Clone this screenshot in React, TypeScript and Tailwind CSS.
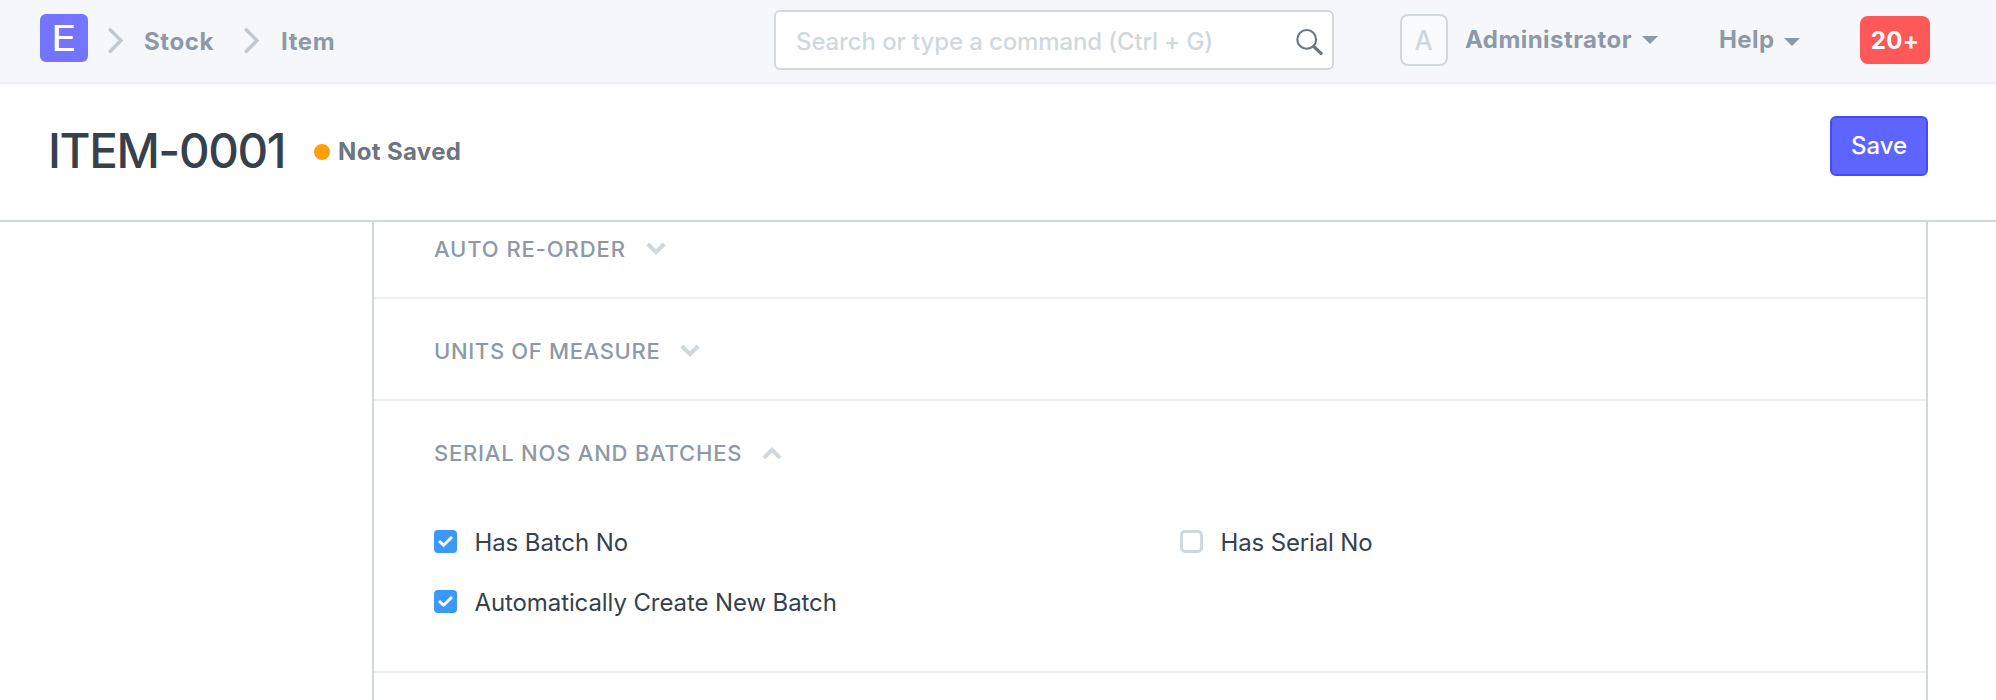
import React from "react";

function CrumbArrow() {
  return (
    <svg width="16" height="28" viewBox="0 0 16 28" fill="none" stroke="#c0c9d2" strokeWidth="3.4" strokeLinecap="butt" strokeLinejoin="miter">
      <path d="M1.3 1.7 L13 13.5 L1.3 25.3" />
    </svg>
  );
}

function Caret() {
  return (
    <svg width="16" height="8" viewBox="0 0 16 8" fill="#8d99a6">
      <path d="M0 0H16L8 8Z" />
    </svg>
  );
}

function Chevron({ up = false }: { up?: boolean }) {
  return (
    <svg width="20" height="14" viewBox="0 0 20 14" fill="none" stroke="#d1d8dd" strokeWidth="4">
      <path d={up ? "M1.8 12 L10 3.8 L18.2 12" : "M1.8 2 L10 10.2 L18.2 2"} />
    </svg>
  );
}

function SearchIcon() {
  return (
    <svg width="28" height="30" viewBox="0 0 28 30" fill="none" stroke="#6c7680">
      <circle cx="11.7" cy="14.4" r="9.4" strokeWidth="2.1" />
      <path d="M18.6 21.2 L20.6 23.2" strokeWidth="3" />
      <path d="M20 22.6 L26 28.4" strokeWidth="3.4" strokeLinecap="round" />
    </svg>
  );
}

function Section({ title, tracking, up, children }: { title: string; tracking: string; up?: boolean; children?: React.ReactNode }) {
  return (
    <section className="border-b-2 border-[#ebeff2] pl-[60px]">
      <div className="flex h-[100px] items-center pt-1">
        <h2 className={`text-[22px] leading-[26px] font-[450] whitespace-nowrap text-[#8d99a6] ${tracking}`}>{title}</h2>
        <div className="ml-5">
          <Chevron up={up} />
        </div>
      </div>
      {children}
    </section>
  );
}

function Check({ label, tracking, checked }: { label: string; tracking: string; checked?: boolean }) {
  return (
    <label className="flex h-[60px] items-start">
      {checked ? (
        <span className="flex h-[23px] w-[23px] items-center justify-center rounded-[4px] bg-[#3b99fc]">
          <svg width="17" height="13" viewBox="0 0 17 13" fill="none" stroke="#fff" strokeWidth="3">
            <path d="M2 6 L6.6 10.2 L15 2" />
          </svg>
        </span>
      ) : (
        <span className="h-[23px] w-[23px] rounded-[5px] border-[3px] border-[#d1d8dd] bg-white" />
      )}
      <span className={`-mt-[2px] ml-[17.5px] text-2xl leading-[30px] whitespace-nowrap text-[#36414c] ${tracking}`}>{label}</span>
    </label>
  );
}

export default function App() {
  return (
    <div className="flex h-[700px] w-[1996px] flex-col overflow-hidden bg-white font-['Inter',sans-serif] text-[#36414c]">
      <header className="flex h-[84px] shrink-0 items-start border-b-2 border-[#ebeff2] bg-[#f5f7fa] text-2xl leading-[30px] font-bold text-[#8d99a6]">
        <div className="mt-[14px] ml-10 flex h-12 w-12 items-center justify-center rounded-md bg-[#7574ff] text-4xl font-normal text-white">
          <span className="scale-x-[1.18]">E</span>
        </div>
        <div className="mt-[27px] ml-5 w-[36px]">
          <CrumbArrow />
        </div>
        <a className="mt-[27px] w-[100px] tracking-[0.6px] whitespace-nowrap">Stock</a>
        <div className="mt-[27px] w-[37px]">
          <CrumbArrow />
        </div>
        <a className="mt-[27px] w-[99px] tracking-[0.6px] whitespace-nowrap">Item</a>
        <div className="mt-[10px] ml-[394px] flex h-[60px] w-[560px] items-center justify-between rounded-md border-2 border-[#d1d8dd] bg-white pr-[9px] pl-5 font-[450] text-[#d1d8dd]">
          <span className="mt-1 tracking-[-0.12px] whitespace-nowrap">Search or type a command (Ctrl + G)</span>
          <SearchIcon />
        </div>
        <div className="mt-[14px] ml-[66px] flex h-[52px] w-12 items-center justify-center rounded-lg border-2 border-[#d1d8dd] bg-[#fafbfc] text-[27px] font-medium text-[#d1d8dd]">
          <span className="mt-px scale-x-95">A</span>
        </div>
        <div className="mt-[25px] ml-[17px] flex w-[255px]">
          <span className="w-[177px] tracking-[0.45px] whitespace-nowrap">Administrator</span>
          <div className="mt-[11px]">
            <Caret />
          </div>
        </div>
        <div className="mt-[25px] -ml-px flex w-[141px]">
          <span className="w-[65px] tracking-[0.4px] whitespace-nowrap">Help</span>
          <div className="mt-[13px]">
            <Caret />
          </div>
        </div>
        <div className="mt-4 flex h-12 w-[70px] items-center justify-center rounded-lg bg-[#ff5858] text-white">
          <span className="mt-px tracking-[0.3px]">20+</span>
        </div>
      </header>

      <div className="flex h-[138px] shrink-0 items-start border-b-2 border-[#d1d8dd] pr-[68px] pl-12">
        <h1 className="mt-[37px] w-[266px] text-[47.5px] leading-[60px] font-medium tracking-[-1.4px] whitespace-nowrap">ITEM-0001</h1>
        <span className="mt-[60px] h-4 w-4 rounded-full bg-[#ffa00a]" />
        <span className="mt-[53px] ml-2 text-2xl leading-[30px] font-bold tracking-[0.35px] whitespace-nowrap text-[#6c7680]">Not Saved</span>
        <button className="mt-8 ml-auto flex h-[60px] w-[98px] items-center justify-center rounded-md border-2 border-[#444bff] bg-[#5e64ff] text-2xl leading-[30px] font-medium text-white">Save</button>
      </div>

      <main className="ml-[372px] w-[1556px] grow overflow-hidden border-x-2 border-[#d1d8dd]">
        <div className="-mt-[25px]">
          <Section title="AUTO RE-ORDER" tracking="tracking-[0.9px]" />
          <Section title="UNITS OF MEASURE" tracking="tracking-[0.65px]" />
          <Section title="SERIAL NOS AND BATCHES" tracking="tracking-[0.78px]" up>
            <div className="grid h-[170px] grid-cols-[746px_1fr] pt-[29px]">
              <div>
                <Check label="Has Batch No" tracking="tracking-[-0.1px]" checked />
                <Check label="Automatically Create New Batch" tracking="tracking-[-0.1px]" checked />
              </div>
              <Check label="Has Serial No" tracking="tracking-[-0.15px]" />
            </div>
          </Section>
        </div>
      </main>
    </div>
  );
}
